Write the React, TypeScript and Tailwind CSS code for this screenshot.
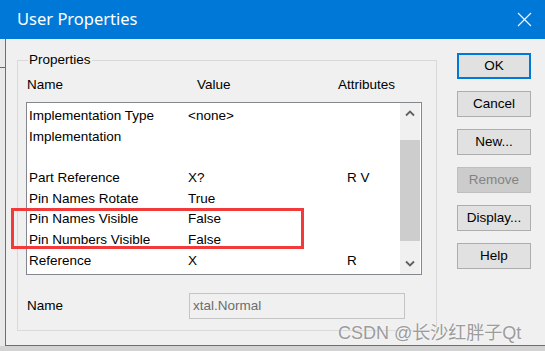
import React from "react";

const rows: [string, string, string][] = [
  ["Implementation Type", "<none>", ""],
  ["Implementation", "", ""],
  ["", "", ""],
  ["Part Reference", "X?", "R V"],
  ["Pin Names Rotate", "True", ""],
  ["Pin Names Visible", "False", ""],
  ["Pin Numbers Visible", "False", ""],
  ["Reference", "X", "R"],
];

function Btn({ label, primary, disabled }: { label: string; primary?: boolean; disabled?: boolean }) {
  const cls = primary
    ? "border-2 border-[#0078d7] bg-[#e1e1e1] text-black"
    : disabled
    ? "border border-[#bfbfbf] bg-[#cccccc] text-[#838383]"
    : "border border-[#adadad] bg-[#e1e1e1] text-black";
  return (
    <div className={`w-[74px] h-[26px] flex items-center justify-center text-[13.5px] ${cls}`}>{label}</div>
  );
}

export default function App() {
  return (
    <div className="w-[545px] h-[351px] bg-[#d6d6d6] flex flex-col overflow-hidden relative font-['Liberation_Sans',sans-serif] text-black">
      <div className="h-[39px] bg-[#0078d7] flex items-center pl-[17px] pr-[10px] shrink-0">
        <span className="flex-1 text-white text-[16.5px] font-['Noto_Sans',sans-serif] leading-none">User Properties</span>
        <svg width="15" height="15" viewBox="0 0 15 15" className="mr-[3px]">
          <path d="M1 1 L14 14 M14 1 L1 14" stroke="white" strokeWidth="1.1" fill="none" />
        </svg>
      </div>
      <div className="flex h-[307px] shrink-0">
        <div className="w-[5px] bg-[#e9e9e9] relative">
          <div className="absolute top-[28px] left-0 w-full h-px bg-[#e03a3a]" />
        </div>
        <div className="flex-1 bg-[#f0f0f0] border-l border-b border-[#1a84d8] flex pl-[11px] pt-[13px]">
          <fieldset className="w-[420px] h-[279px] border border-[#d9d9d9] shrink-0">
            <legend className="ml-[10px] px-[1px] text-[13.5px] leading-[16px]">Properties</legend>
            <div className="flex text-[13.5px] leading-[16px] mt-[9px] pl-[9px]">
              <span className="w-[170px]">Name</span>
              <span className="w-[141px]">Value</span>
              <span>Attributes</span>
            </div>
            <div className="ml-[8px] mt-[9px] w-[396px] h-[173px] border border-[#828790] bg-white flex pr-[1px]">
              <div className="flex-1 pt-[3px] pl-[2px]">
                {rows.map(([n, v, a], i) => (
                  <div key={i} className="flex h-[20.7px] leading-[20.7px] text-[13.5px]">
                    <span className="w-[159px] whitespace-nowrap">{n}</span>
                    <span className="w-[159px]">{v}</span>
                    <span>{a}</span>
                  </div>
                ))}
              </div>
              <div className="w-[20px] bg-[#f0f0f0] flex flex-col">
                <div className="h-[21px] flex items-center justify-center">
                  <svg width="10" height="7" viewBox="0 0 10 7">
                    <path d="M1 5.5 L5 1.5 L9 5.5" stroke="#606060" strokeWidth="1.8" fill="none" />
                  </svg>
                </div>
                <div className="flex-1 pt-[16px] pb-[12px]">
                  <div className="h-full bg-[#cdcdcd]" />
                </div>
                <div className="h-[21px] flex items-center justify-center">
                  <svg width="10" height="7" viewBox="0 0 10 7">
                    <path d="M1 1.5 L5 5.5 L9 1.5" stroke="#606060" strokeWidth="1.8" fill="none" />
                  </svg>
                </div>
              </div>
            </div>
            <div className="flex items-center mt-[18px] pl-[9px] text-[13.5px]">
              <span className="w-[162px]">Name</span>
              <div className="w-[216px] h-[26px] border border-[#c4c4c4] bg-[#f0f0f0] flex items-center pl-[3px] text-[#6d6d6d]">
                xtal.Normal
              </div>
            </div>
          </fieldset>
          <div className="ml-[20px] mt-[1px] flex flex-col gap-[12px]">
            <Btn label="OK" primary />
            <Btn label="Cancel" />
            <Btn label="New..." />
            <Btn label="Remove" disabled />
            <Btn label="Display..." />
            <Btn label="Help" />
          </div>
        </div>
      </div>
      <div className="flex-1 bg-[#d3d3d3]" />
      <div className="absolute left-[11px] top-[208px] w-[293px] h-[41px] border-[3px] border-[#f23a3a]" />
      <div className="absolute left-[338px] top-[322px] text-[18px] leading-[22px] text-[#9c9c9c] font-['Liberation_Sans','Noto_Sans_CJK_SC',sans-serif] [text-shadow:0_0_2px_#fff]">
        CSDN @长沙红胖子Qt
      </div>
    </div>
  );
}
